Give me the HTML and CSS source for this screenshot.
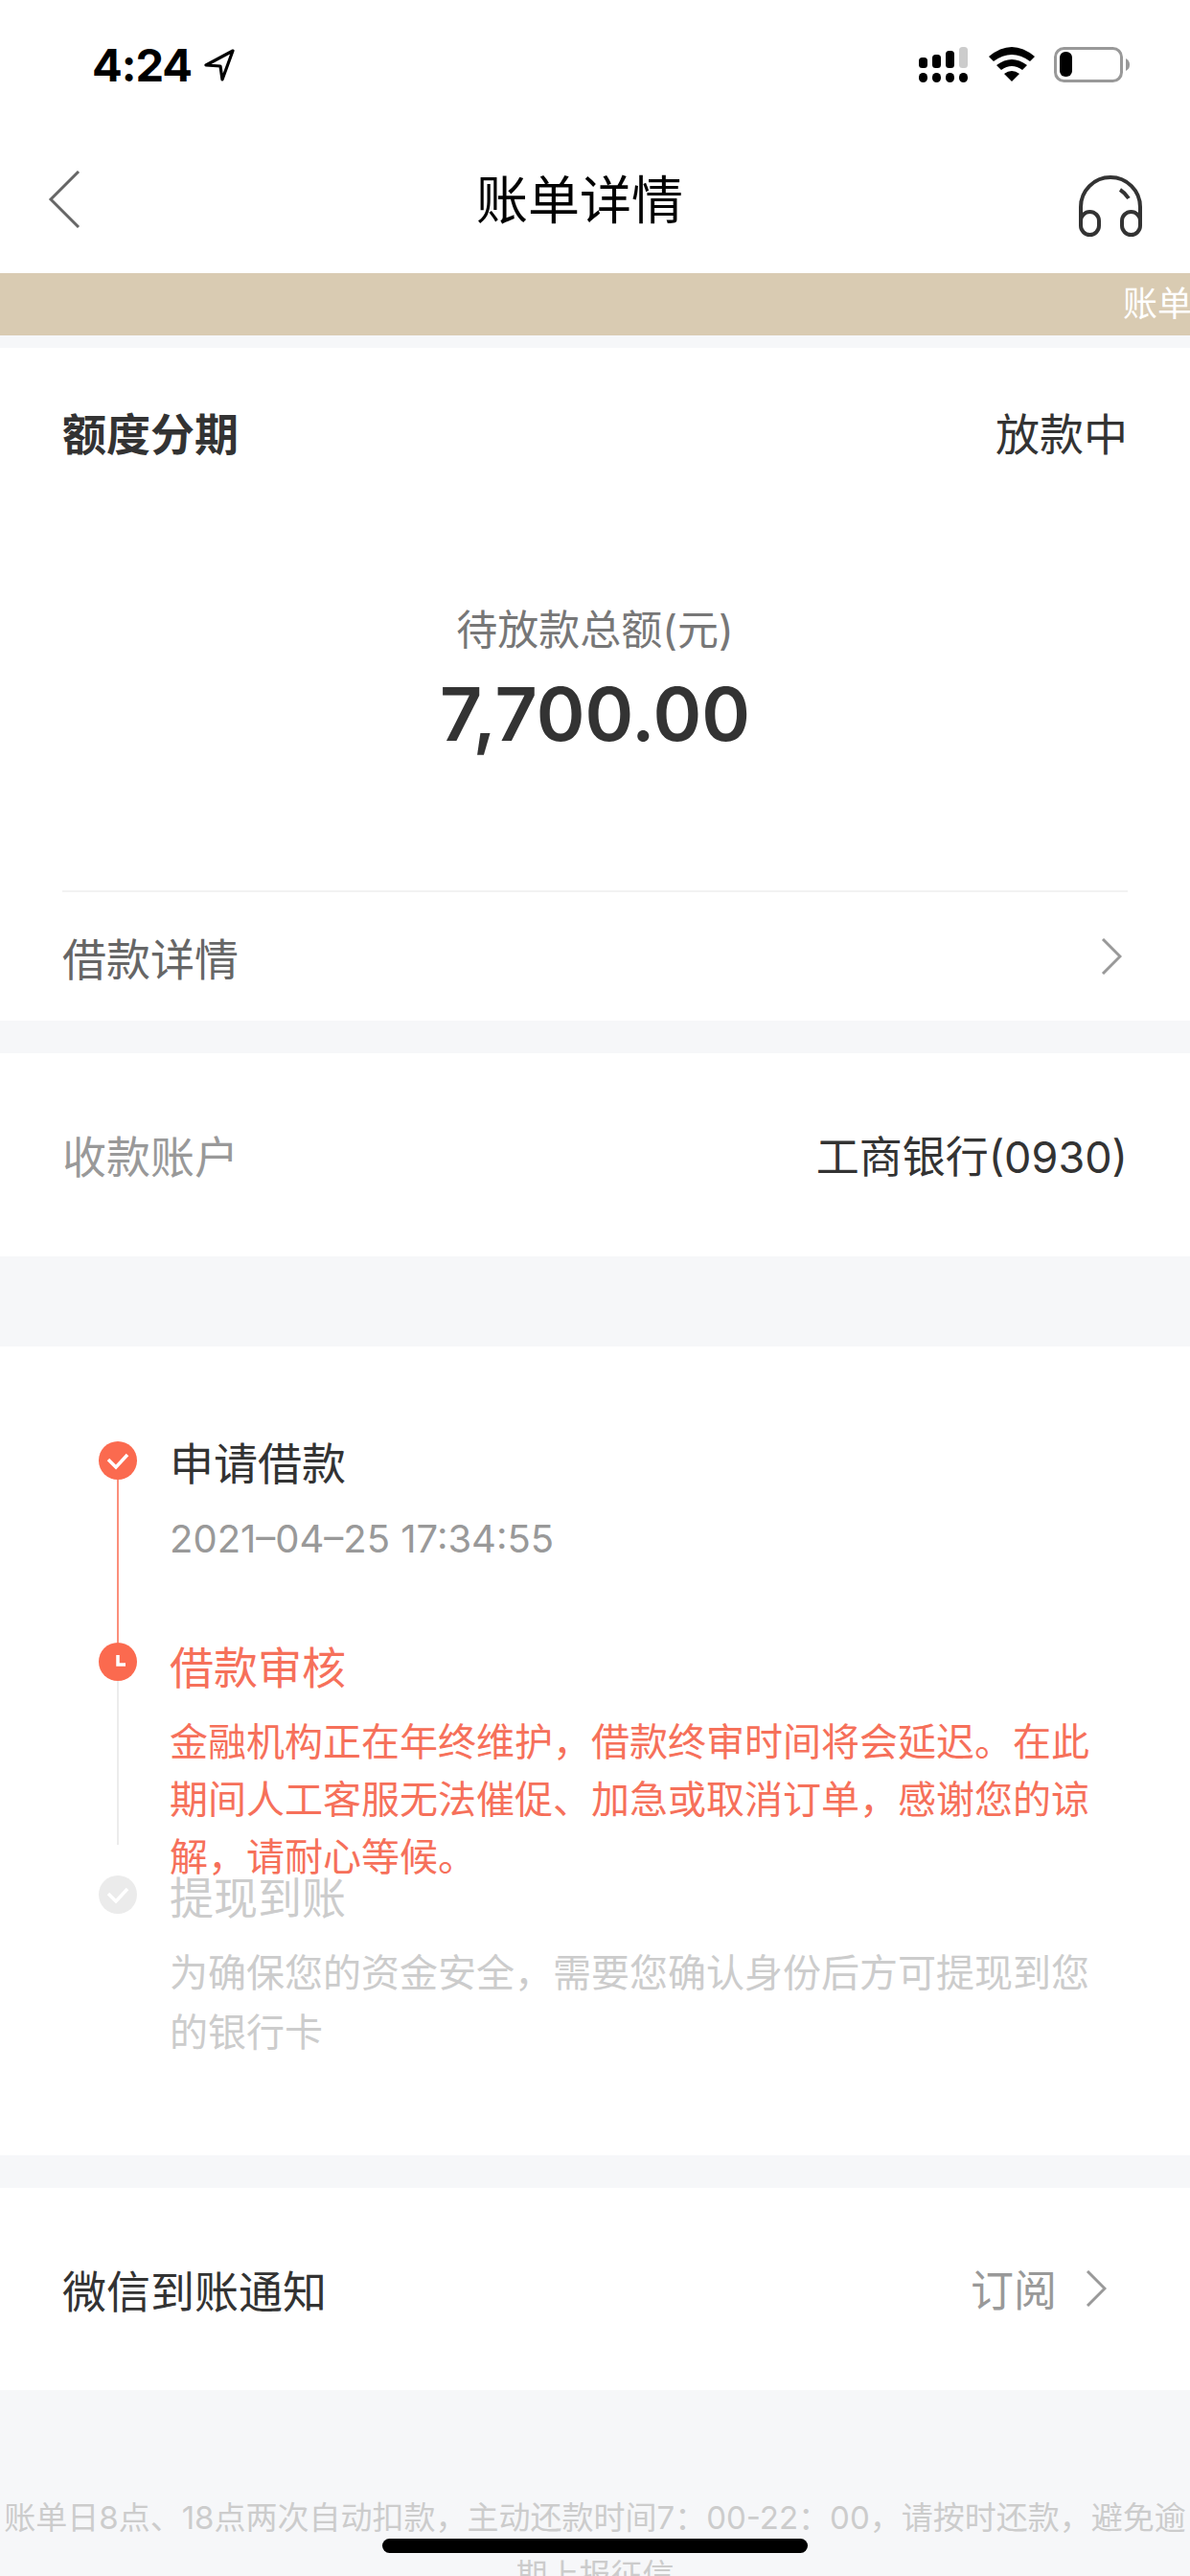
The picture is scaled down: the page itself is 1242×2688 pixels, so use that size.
FILE: index.html
```html
<!DOCTYPE html>
<html lang="zh-CN">
<head>
    <meta charset="UTF-8">
    <meta name="viewport" content="width=device-width, initial-scale=1.0">
    <title>账单详情</title>
    <link rel="stylesheet" href="styles.css">
</head>
<body>
    <div class="page">
        <div class="status-bar">
            <div class="status-left">
                <span class="time">4:24</span>
                <svg class="arrow-icon" viewBox="0 0 32 34"><path d="M30 2 L2 17 L17 18 L19 32 Z" fill="none" stroke="#000" stroke-width="3.2" stroke-linejoin="round"/></svg>
            </div>
            <div class="status-right">
                <svg class="signal-icon" viewBox="0 0 51 37">
                    <rect x="0" y="11" width="9" height="11" rx="3.5"/>
                    <rect x="14" y="8" width="9" height="14" rx="3.5"/>
                    <rect x="28" y="4" width="9" height="18" rx="3.5"/>
                    <rect x="42" y="0" width="9" height="22" rx="3.5" fill="#ccc"/>
                    <rect x="0" y="27" width="9" height="10" rx="4.5"/>
                    <rect x="14" y="27" width="9" height="10" rx="4.5"/>
                    <rect x="28" y="27" width="9" height="10" rx="4.5"/>
                    <rect x="42" y="27" width="9" height="10" rx="4.5"/>
                </svg>
                <svg class="wifi-icon" viewBox="0 0 48 36">
                    <path d="M0 10 Q24 -10 48 10 L43 15 Q24 1 5 15 Z"/>
                    <path d="M8 19 Q24 7 40 19 L35 24 Q24 16 13 24 Z"/>
                    <path d="M16 28 Q24 22 32 28 L24 36 Z"/>
                </svg>
                <svg class="battery-icon" viewBox="0 0 80 37">
                    <rect x="1.5" y="1.5" width="69" height="34" rx="9" fill="none" stroke="#999" stroke-width="3"/>
                    <rect x="6" y="5" width="13" height="26" rx="6"/>
                    <path d="M75 12 Q79 14 79 18.500 Q79 23 75 25 Z" fill="#999"/>
                </svg>
            </div>
        </div>

        <div class="nav">
            <svg class="back-icon" viewBox="0 0 34 60"><path d="M32 1 L3 30 L32 59" fill="none" stroke="#666" stroke-width="3"/></svg>
            <h1 class="nav-title">账单详情</h1>
            <svg class="service-icon" viewBox="0 0 66 64" fill="none" stroke="#333" stroke-width="4">
                <path d="M2 48 V33 A31 31 0 0 1 64 33 V48"/>
                <rect x="2" y="38" width="19" height="24" rx="9.500"/>
                <rect x="45" y="38" width="19" height="24" rx="9.500"/>
                <path d="M43 15 Q48 18 52 24"/>
            </svg>
        </div>

        <div class="notice">
            <span class="notice-text">账单日8点、18点两次自动扣款</span>
        </div>

        <section class="card summary">
            <div class="summary-head">
                <span class="summary-type">额度分期</span>
                <span class="summary-state">放款中</span>
            </div>
            <div class="summary-amount">
                <p class="amount-label">待放款总额(元)</p>
                <p class="amount-value">7,700.00</p>
            </div>
            <div class="detail-row">
                <span>借款详情</span>
                <svg class="chevron" viewBox="0 0 22 38"><path d="M2 1 L20 19 L2 37" fill="none" stroke="#999" stroke-width="3"/></svg>
            </div>
        </section>

        <section class="card account">
            <span class="account-label">收款账户</span>
            <span class="account-value">工商银行(0930)</span>
        </section>

        <section class="card timeline">
            <div class="step step-first">
                <div class="step-rail">
                    <svg class="step-icon" viewBox="0 0 40 40"><circle cx="20" cy="20" r="20" fill="#fb6a4f"/><path d="M10 19 L18 27 L30 14" fill="none" stroke="#fff" stroke-width="3.500"/></svg>
                    <div class="rail-line rail-done"></div>
                </div>
                <div class="step-body">
                    <p class="step-title">申请借款</p>
                    <p class="step-text step-date">2021–04–25 17:34:55</p>
                </div>
            </div>
            <div class="step step-second">
                <div class="step-rail">
                    <svg class="step-icon" viewBox="0 0 40 40"><circle cx="20" cy="20" r="20" fill="#fb6a4f"/><path d="M20 13 V23 H28" fill="none" stroke="#fff" stroke-width="3.500"/></svg>
                    <div class="rail-line rail-todo"></div>
                </div>
                <div class="step-body step-active">
                    <p class="step-title">借款审核</p>
                    <p class="step-text">金融机构正在年终维护，借款终审时间将会延迟。在此期间人工客服无法催促、加急或取消订单，感谢您的谅解，请耐心等候。</p>
                </div>
            </div>
            <div class="step">
                <div class="step-rail">
                    <svg class="step-icon" viewBox="0 0 40 40"><circle cx="20" cy="20" r="20" fill="#ebebeb"/><path d="M10 19 L18 27 L30 14" fill="none" stroke="#fff" stroke-width="3.500"/></svg>
                </div>
                <div class="step-body step-pending">
                    <p class="step-title">提现到账</p>
                    <p class="step-text">为确保您的资金安全，需要您确认身份后方可提现到您的银行卡</p>
                </div>
            </div>
        </section>

        <section class="card wechat">
            <span class="wechat-label">微信到账通知</span>
            <div class="wechat-action">
                <span>订阅</span>
                <svg class="chevron" viewBox="0 0 22 38"><path d="M2 1 L20 19 L2 37" fill="none" stroke="#999" stroke-width="3"/></svg>
            </div>
        </section>

        <p class="footnote">账单日8点、18点两次自动扣款，主动还款时间7：00-22：00，请按时还款，避免逾期上报征信</p>

        <div class="home-indicator"></div>
    </div>
</body>
</html>
```

FILE: styles.css
```css
* {
    margin: 0;
    padding: 0;
    box-sizing: border-box;
}

html, body {
    width: 1242px;
    height: 2688px;
    overflow: hidden;
    background-color: #f6f7f9;
    font-family: Inter, "Noto Sans CJK SC", sans-serif;
}

.page {
    position: relative;
    width: 1242px;
    height: 2688px;
    overflow: hidden;
}

/* status bar */
.status-bar {
    height: 132px;
    background-color: #fff;
    display: flex;
    justify-content: space-between;
    align-items: flex-start;
    padding: 49px 62px 0 96px;
}

.status-left {
    display: flex;
    align-items: center;
    gap: 13px;
    height: 37px;
}

.time {
    font-size: 47px;
    font-weight: 700;
    line-height: 37px;
    letter-spacing: -1px;
    color: #000;
}

.arrow-icon {
    width: 32px;
    height: 34px;
}

.status-right {
    display: flex;
    align-items: flex-start;
    gap: 22px;
}

.signal-icon {
    width: 51px;
    height: 37px;
}

.wifi-icon {
    width: 48px;
    height: 36px;
}

.battery-icon {
    width: 80px;
    height: 37px;
    margin-left: -2px;
}

/* nav */
.nav {
    height: 153px;
    background-color: #fff;
    display: flex;
    justify-content: space-between;
    align-items: flex-start;
    padding: 46px 50px 0 50px;
}

.back-icon {
    width: 34px;
    height: 60px;
}

.nav-title {
    font-size: 54px;
    font-weight: 400;
    line-height: 60px;
    color: #000;
    margin-top: 2px;
}

.service-icon {
    width: 66px;
    height: 64px;
    margin-top: 5px;
}

.notice {
    height: 65px;
    background-color: #d9cbb2;
    padding-left: 1172px;
    white-space: nowrap;
    overflow: hidden;
    line-height: 65px;
}

.notice-text {
    font-size: 36px;
    color: #fff;
}

.card {
    background-color: #fff;
}

/* summary */
.summary {
    margin-top: 13px;
    height: 702px;
    padding: 0 65px 0 65px;
}

.summary-head {
    height: 174px;
    display: flex;
    justify-content: space-between;
    align-items: center;
    font-size: 46px;
}

.summary-type {
    font-weight: 700;
    color: #333;
}

.summary-state {
    color: #333;
}

.summary-amount {
    height: 394px;
    padding-top: 90px;
    text-align: center;
    border-bottom: 2px solid #f2f2f2;
}

.amount-label {
    font-size: 43px;
    line-height: 60px;
    color: #777;
}

.amount-value {
    font-size: 77px;
    font-weight: 600;
    line-height: 90px;
    margin-top: 13px;
    color: #333;
}

.detail-row {
    height: 134px;
    display: flex;
    justify-content: space-between;
    align-items: center;
    font-size: 46px;
    color: #666;
    padding-right: 6px;
}

.chevron {
    width: 22px;
    height: 38px;
}

/* account */
.account {
    margin-top: 34px;
    height: 212px;
    padding: 0 65px 2px;
    display: flex;
    justify-content: space-between;
    align-items: center;
    font-size: 45px;
}

.account-label {
    font-size: 46px;
    color: #999;
}

.account-value {
    color: #333;
}

/* timeline */
.timeline {
    margin-top: 94px;
    height: 844px;
    padding: 99px 90px 0 103px;
}

.step {
    display: flex;
    gap: 34px;
}

.step-first {
    height: 210px;
}

.step-second {
    height: 243px;
}

.step-rail {
    width: 40px;
    flex-shrink: 0;
    display: flex;
    flex-direction: column;
    align-items: center;
}

.step-icon {
    width: 40px;
    height: 40px;
    flex-shrink: 0;
}

.rail-line {
    width: 2px;
}

.rail-done {
    height: 170px;
    background-color: #fb8f7b;
}

.rail-todo {
    height: 171px;
    background-color: #ececec;
}

.step-title {
    font-size: 46px;
    line-height: 46px;
    color: #333;
}

.step-second .step-title {
    margin-top: 3px;
}

.step-text {
    font-size: 40px;
    line-height: 60px;
    margin-top: 26px;
    color: #999;
}

.step-active .step-title,
.step-active .step-text {
    color: #f6705a;
}

.step-active .step-text {
    margin-top: 25px;
}

.step-pending .step-title,
.step-pending .step-text {
    color: #ccc;
}

.step-pending .step-text {
    line-height: 62px;
    margin-top: 25px;
}

/* wechat */
.wechat {
    margin-top: 34px;
    height: 211px;
    padding: 0 87px 2px 65px;
    display: flex;
    justify-content: space-between;
    align-items: center;
    font-size: 46px;
}

.wechat-label {
    color: #333;
}

.wechat-action {
    display: flex;
    align-items: center;
    gap: 30px;
    font-size: 45px;
    color: #999;
}

/* footer */
.footnote {
    margin-top: 103px;
    font-size: 33px;
    line-height: 60px;
    color: #ccc;
    text-align: center;
}

.home-indicator {
    position: absolute;
    left: 399px;
    top: 2649px;
    width: 444px;
    height: 15px;
    border-radius: 8px;
    background-color: #000;
}
```
